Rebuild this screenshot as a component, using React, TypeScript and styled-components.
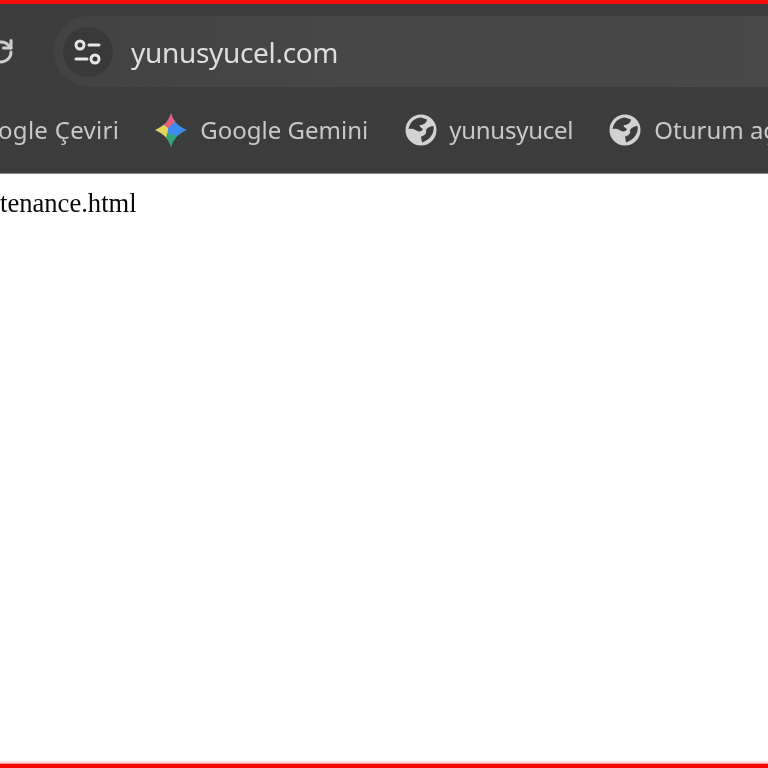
import React from "react";
import styled, { createGlobalStyle } from "styled-components";

const Global = createGlobalStyle`
  html, body { margin: 0; padding: 0; background: #fff; }
  #root { width: 768px; height: 768px; overflow: hidden; }
`;

const Page = styled.div`
  width: 768px;
  height: 768px;
  display: flex;
  flex-direction: column;
  overflow: hidden;
  background: #fff;
`;

const TopEdge = styled.div`
  height: 4px;
  flex: none;
  background: #f60b0b;
`;

const Chrome = styled.header`
  flex: none;
  height: 170px;
  box-sizing: border-box;
  display: flex;
  flex-direction: column;
  background: #3c3c3c;
  border-bottom: 1px solid #8e8e8e;
  font-family: "Noto Sans", "Open Sans", sans-serif;
`;

const Toolbar = styled.div`
  height: 83px;
  flex: none;
  display: flex;
  align-items: flex-end;
  filter: blur(0.55px);
`;

const ReloadSlot = styled.div`
  width: 54px;
  height: 71px;
  flex: none;
  display: flex;
  align-items: center;
  svg {
    flex: none;
    margin-left: -15.5px;
  }
`;

const Omnibox = styled.div`
  flex: 1;
  height: 71px;
  display: flex;
  align-items: center;
  gap: 18px;
  padding-left: 9px;
  background: linear-gradient(to right, #424242 0, #474747 300px, #484848 100%);
  border-radius: 36px 0 0 36px;
`;

const TuneButton = styled.div`
  width: 50px;
  height: 50px;
  flex: none;
  border-radius: 50%;
  background: #393939;
  display: flex;
  align-items: center;
  justify-content: center;
`;

const Url = styled.span`
  color: #dedede;
  font-size: 28px;
  letter-spacing: -0.32px;
  line-height: 1;
  white-space: nowrap;
`;

const BookmarkBar = styled.nav`
  flex: 1;
  display: flex;
  align-items: center;
  overflow: hidden;
  white-space: nowrap;
  filter: blur(0.55px);
`;

const Bookmark = styled.div<{ $gap: number; $after?: number }>`
  flex: none;
  display: flex;
  align-items: center;
  gap: ${(p) => p.$gap}px;
  margin-right: ${(p) => p.$after ?? 0}px;
`;

const FirstBookmark = styled(Bookmark)`
  margin-left: -2px;
`;

const Label = styled.span<{ $spacing: number }>`
  color: #c8c8c8;
  font-size: 24px;
  letter-spacing: ${(p) => p.$spacing}px;
  line-height: 1;
`;

const Content = styled.main`
  flex: 1;
  min-height: 0;
  padding-top: 15px;
  overflow: hidden;
`;

const FileName = styled.p`
  margin: 0;
  font-family: "Liberation Serif", "Times New Roman", serif;
  font-size: 26.6px;
  line-height: 28px;
  color: #0a0a0a;
  filter: blur(0.35px);
`;

const BottomEdge = styled.div`
  height: 8px;
  flex: none;
  background: linear-gradient(to bottom, #fff 0%, #ffd0d0 38%, #ff0a0a 55%, #ff0000 100%);
`;

const Reload = () => (
  <svg width="32" height="32" viewBox="0 0 32 32" fill="none" stroke="#cfcfcf" strokeWidth="3" strokeLinecap="round" strokeLinejoin="round" aria-hidden>
    <path d="M26 16a10 10 0 1 1-3-7.200L26 12" />
    <path d="M26 4.500V12h-7.500" />
  </svg>
);

const Tune = () => (
  <svg width="30" height="28" viewBox="0 0 30 28" fill="none" stroke="#e6e6e6" strokeWidth="3" strokeLinecap="round" aria-hidden>
    <circle cx="7" cy="7" r="4" />
    <path d="M16 7h10" />
    <path d="M3 21h11" />
    <circle cx="22" cy="21" r="4" />
  </svg>
);

const Gemini = () => (
  <svg width="32" height="34" viewBox="0 0 32 34" aria-hidden>
    <defs>
      <clipPath id="gemStar">
        <path d="M16 0C18 8 23 13 32 17 23 21 18 26 16 34 14 26 9 21 0 17 9 13 14 8 16 0Z" />
      </clipPath>
    </defs>
    <g clipPath="url(#gemStar)">
      <rect width="32" height="34" fill="#3f8cf0" />
      <path d="M16 0L6 11 13 15 21 8Z" fill="#e5607a" />
      <path d="M0 17L6 10 13 15 12 27 0 24Z" fill="#e6d457" />
      <path d="M12 20L22 23 18 34 10 34Z" fill="#2fa777" />
    </g>
  </svg>
);

const Globe = () => (
  <svg width="32" height="32" viewBox="0 0 32 32" aria-hidden>
    <circle cx="16" cy="16" r="15.500" fill="#d2d2d2" />
    <path d="M3.500 15C4.500 8.500 10 3.500 16 3.500L22 5.500C21.500 9.500 18 11 15 11 14 12.500 16 13.500 18 15 17 18 13 18 10.500 16 8 14.500 6 14.500 3.500 15Z" fill="#3c3c3c" />
    <path d="M28.500 12C30 18.500 25 26 17 28.500L16 22.500C19 22 22 20 21 16 23 13 26 12 28.500 12Z" fill="#3c3c3c" />
  </svg>
);

export default function App() {
  return (
    <Page>
      <Global />
      <TopEdge />
      <Chrome>
        <Toolbar>
          <ReloadSlot>
            <Reload />
          </ReloadSlot>
          <Omnibox>
            <TuneButton>
              <Tune />
            </TuneButton>
            <Url>yunusyucel.com</Url>
          </Omnibox>
        </Toolbar>
        <BookmarkBar>
          <FirstBookmark $gap={0} $after={36}>
            <Label $spacing={0.3}>ogle Çeviri</Label>
          </FirstBookmark>
          <Bookmark $gap={13} $after={37}>
            <Gemini />
            <Label $spacing={0}>Google Gemini</Label>
          </Bookmark>
          <Bookmark $gap={12} $after={36}>
            <Globe />
            <Label $spacing={-0.25}>yunusyucel</Label>
          </Bookmark>
          <Bookmark $gap={13}>
            <Globe />
            <Label $spacing={0}>Oturum aç</Label>
          </Bookmark>
        </BookmarkBar>
      </Chrome>
      <Content>
        <FileName>tenance.html</FileName>
      </Content>
      <BottomEdge />
    </Page>
  );
}
